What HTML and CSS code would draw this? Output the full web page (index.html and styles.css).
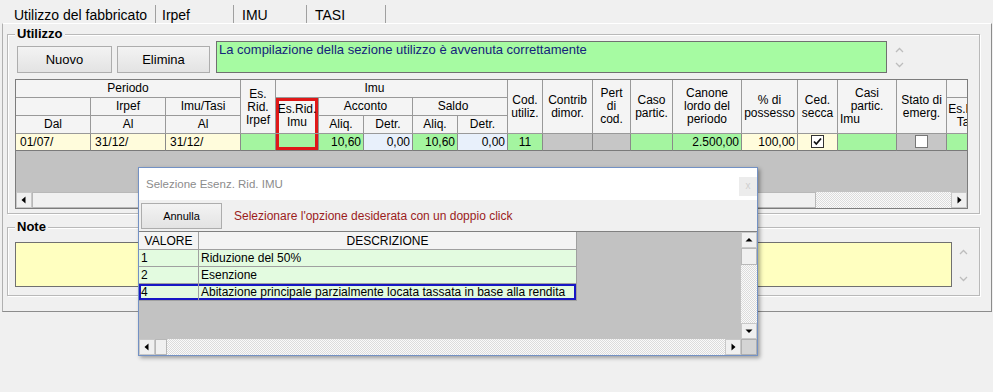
FILE: index.html
```html
<!DOCTYPE html>
<html>
<head>
<meta charset="utf-8">
<link rel="stylesheet" href="styles.css">
</head>
<body>
<div class="tabs">
  <div class="tab tab-main">Utilizzo del fabbricato</div>
  <div class="tab tab-irpef">Irpef</div>
  <div class="tab tab-imu">IMU</div>
  <div class="tab tab-tasi">TASI</div>
</div>
<div class="panel">
  <fieldset class="group g-util">
    <legend>Utilizzo</legend>
    <div class="toprow">
      <button class="btn b-nuovo">Nuovo</button>
      <button class="btn b-elimina">Elimina</button>
      <div class="msg">La compilazione della sezione utilizzo è avvenuta correttamente</div>
      <div class="spin spin-msg">
        <svg width="9" height="6" viewBox="0 0 9 6"><polyline points="1,5 4.5,1.5 8,5" fill="none" stroke="#bdbdbd" stroke-width="1.3"/></svg>
        <svg width="9" height="6" viewBox="0 0 9 6"><polyline points="1,1 4.5,4.5 8,1" fill="none" stroke="#bdbdbd" stroke-width="1.3"/></svg>
      </div>
    </div>
    <div class="grid">
      <div class="grid-body">
        <table class="tbl">
          <colgroup>
            <col><col><col><col><col><col><col><col><col><col><col><col><col><col><col><col><col><col><col>
          </colgroup>
          <tr class="h">
            <th colspan="3">Periodo</th>
            <th rowspan="3" class="esirpef">Es.<br>Rid.<br>Irpef</th>
            <th colspan="5" class="imu">Imu</th>
            <th rowspan="3">Cod.<br>utiliz.</th>
            <th rowspan="3">Contrib<br>dimor.</th>
            <th rowspan="3">Pert<br>di<br>cod.</th>
            <th rowspan="3">Caso<br>partic.</th>
            <th rowspan="3">Canone<br>lordo del<br>periodo</th>
            <th rowspan="3">% di<br>possesso</th>
            <th rowspan="3">Ced.<br>secca</th>
            <th rowspan="3">Casi<br>partic.<br><span class="lft">Imu</span></th>
            <th rowspan="3">Stato di<br>emerg.</th>
            <th></th>
          </tr>
          <tr class="h">
            <th></th>
            <th>Irpef</th>
            <th>Imu/Tasi</th>
            <th rowspan="2" class="hl">Es.Rid.<br>Imu</th>
            <th colspan="2">Acconto</th>
            <th colspan="2" class="saldo">Saldo</th>
            <th rowspan="2" class="last">Es.Rid.<br>Tasi</th>
          </tr>
          <tr class="h">
            <th>Dal</th>
            <th>Al</th>
            <th>Al</th>
            <th>Aliq.</th>
            <th>Detr.</th>
            <th>Aliq.</th>
            <th>Detr.</th>
          </tr>
          <tr class="d">
            <td class="y">01/07/</td>
            <td class="y">31/12/</td>
            <td class="y">31/12/</td>
            <td class="g"></td>
            <td class="g hl"></td>
            <td class="g r">10,60</td>
            <td class="b r">0,00</td>
            <td class="g r">10,60</td>
            <td class="b r">0,00</td>
            <td class="g c">11</td>
            <td class="k"></td>
            <td class="k"></td>
            <td class="g"></td>
            <td class="g r">2.500,00</td>
            <td class="y r">100,00</td>
            <td class="y c"><span class="cb"><svg width="11" height="11" viewBox="0 0 11 11"><polyline points="2,5.5 4.3,8 9,2.5" fill="none" stroke="#111" stroke-width="1.8"/></svg></span></td>
            <td class="g"></td>
            <td class="k c"><span class="cb cb-off"></span></td>
            <td class="g"></td>
          </tr>
        </table>
      </div>
      <div class="hscroll">
        <div class="sbtn"><svg width="14" height="14" viewBox="0 0 14 14"><path d="M8.5 3.5 L4.5 7 L8.5 10.5Z" fill="#000"/></svg></div>
        <div class="thumb main-thumb"></div>
        <div class="track"></div>
        <div class="sbtn"><svg width="14" height="14" viewBox="0 0 14 14"><path d="M5.5 3.5 L9.5 7 L5.5 10.5Z" fill="#000"/></svg></div>
      </div>
    </div>
  </fieldset>
  <fieldset class="group g-note">
    <legend>Note</legend>
    <div class="noterow">
      <div class="note"></div>
      <div class="spin spin-note">
        <svg width="9" height="6" viewBox="0 0 9 6"><polyline points="1,5 4.5,1.5 8,5" fill="none" stroke="#bdbdbd" stroke-width="1.3"/></svg>
        <svg width="9" height="6" viewBox="0 0 9 6"><polyline points="1,1 4.5,4.5 8,1" fill="none" stroke="#bdbdbd" stroke-width="1.3"/></svg>
      </div>
    </div>
  </fieldset>
</div>

<div class="dialog">
  <div class="dlg-title">
    <span class="dlg-caption">Selezione Esenz. Rid. IMU</span>
    <span class="dlg-close">x</span>
  </div>
  <div class="dlg-bar">
    <button class="btn b-annulla">Annulla</button>
    <span class="dlg-msg">Selezionare l'opzione desiderata con un doppio click</span>
  </div>
  <div class="dlg-list">
    <div class="dlg-main">
      <div class="dlg-grid">
        <table class="ltbl">
          <colgroup><col><col></colgroup>
          <tr class="lh"><th>VALORE</th><th>DESCRIZIONE</th></tr>
          <tr><td>1</td><td>Riduzione del 50%</td></tr>
          <tr><td>2</td><td>Esenzione</td></tr>
          <tr class="sel"><td>4</td><td>Abitazione principale parzialmente locata tassata in base alla rendita</td></tr>
        </table>
      </div>
      <div class="vscroll">
        <div class="sbtn v"><svg width="14" height="14" viewBox="0 0 14 14"><path d="M3.5 8.5 L7 5 L10.5 8.5Z" fill="#000"/></svg></div>
        <div class="thumb vthumb"></div>
        <div class="track"></div>
        <div class="sbtn v"><svg width="14" height="14" viewBox="0 0 14 14"><path d="M3.5 5.5 L7 9 L10.5 5.5Z" fill="#000"/></svg></div>
      </div>
    </div>
    <div class="dlg-hrow">
      <div class="hscroll dlg-hscroll">
        <div class="sbtn"><svg width="14" height="14" viewBox="0 0 14 14"><path d="M8.5 3.5 L4.5 7 L8.5 10.5Z" fill="#000"/></svg></div>
        <div class="thumb dlg-thumb"></div>
        <div class="track"></div>
        <div class="sbtn"><svg width="14" height="14" viewBox="0 0 14 14"><path d="M5.5 3.5 L9.5 7 L5.5 10.5Z" fill="#000"/></svg></div>
      </div>
      <div class="corner"></div>
    </div>
  </div>
</div>
</body>
</html>
```

FILE: styles.css
```css
* { box-sizing: border-box; }
html, body { margin: 0; padding: 0; background: #f0f0f0; }
body {
  position: relative;
  width: 993px;
  height: 392px;
  overflow: hidden;
  font-family: "Liberation Sans", Arial, sans-serif;
  font-size: 12px;
  color: #000;
}

/* Tabs */
.tabs { display: flex; height: 23px; padding: 5px 0 0 4px; }
.tab {
  height: 18px;
  font-size: 14px;
  line-height: 20px;
  border-right: 1px solid #a0a0a0;
  white-space: nowrap;
  padding-left: 8px;
}
.tab-main { width: 152px; padding-left: 10px; }
.tab-irpef { width: 78px; padding-left: 6px; }
.tab-imu { width: 73px; }
.tab-tasi { width: 79px; }

/* Main panel */
.panel {
  margin-left: 2px;
  width: 990px;
  height: 289px;
  border: 1px solid #8c8c8c;
  border-top-color: #fff;
  border-left-color: #b0b0b0;
  padding-top: 3px;
}

.group {
  margin: 0 11px 0 4px;
  padding: 0 8px 4px 7px;
  border: 1px solid #b9b9b9;
  box-shadow: inset 1px 1px 0 #fff, 1px 1px 0 #fff;
  min-width: 0;
}
.group legend {
  font-weight: bold;
  font-size: 13px;
  line-height: 14px;
  padding: 0 2px;
  background: #f0f0f0;
}

.toprow { display: flex; align-items: flex-end; height: 32px; }
.btn {
  font-family: inherit;
  font-size: 13px;
  color: #000;
  background: linear-gradient(#f3f3f3, #e3e3e3);
  border: 1px solid #adadad;
  padding: 0;
  margin: 0;
  height: 27px;
}
.b-nuovo { width: 95px; margin-left: 2px; }
.b-elimina { width: 93px; margin-left: 5px; }
.msg {
  margin-left: 6px;
  width: 671px;
  height: 32px;
  align-self: flex-start;
  background: #a6fba2;
  border: 1px solid #707070;
  color: #14247a;
  font-size: 13px;
  line-height: 13px;
  padding: 1px 2px;
}
.spin { display: flex; flex-direction: column; justify-content: space-between; }
.spin-msg { align-self: flex-start; height: 21px; margin: 6px 0 0 8px; }

/* Grid */
.grid {
  margin-top: 6px;
  width: 953px;
  height: 130px;
  border: 1px solid #7c7c7c;
  background: #c2c2c2;
  display: flex;
  flex-direction: column;
  overflow: hidden;
}
.grid-body { flex: 1; overflow: hidden; }
.tbl {
  width: 973px;
  table-layout: fixed;
  border-collapse: separate;
  border-spacing: 0;
}
.tbl col:nth-child(1), .tbl col:nth-child(2), .tbl col:nth-child(3) { width: 75px; }
.tbl col:nth-child(4) { width: 35px; }
.tbl col:nth-child(5) { width: 43px; }
.tbl col:nth-child(6) { width: 45px; }
.tbl col:nth-child(7) { width: 49px; }
.tbl col:nth-child(8) { width: 45px; }
.tbl col:nth-child(9) { width: 50px; }
.tbl col:nth-child(10) { width: 35px; }
.tbl col:nth-child(11) { width: 50px; }
.tbl col:nth-child(12) { width: 38px; }
.tbl col:nth-child(13) { width: 42px; }
.tbl col:nth-child(14) { width: 69px; }
.tbl col:nth-child(15) { width: 56px; }
.tbl col:nth-child(16) { width: 40px; }
.tbl col:nth-child(17) { width: 59px; }
.tbl col:nth-child(18) { width: 50px; }
.tbl col:nth-child(19) { width: 42px; }

.tbl tr.h { height: 18px; }
.tbl tr.d { height: 17px; }
.tbl th {
  background: #f4f4f4;
  font-weight: normal;
  font-size: 12px;
  line-height: 13px;
  padding: 0;
  text-align: center;
  vertical-align: middle;
  white-space: nowrap;
  overflow: hidden;
  border-right: 1px solid #999;
  border-bottom: 1px solid #999;
}
.tbl th.esirpef { padding-top: 2px; }
.tbl th.imu { padding-right: 34px; }
.tbl th.saldo { padding-right: 14px; }
.tbl th .lft { display: block; text-align: left; padding-left: 2px; }
.tbl td {
  padding: 0 2px 0 4px;
  font-size: 12px;
  line-height: 16px;
  white-space: nowrap;
  overflow: hidden;
  border-right: 1px solid #8a8a8a;
  border-bottom: 1px solid #7a7a7a;
}
.tbl td.r { text-align: right; }
.tbl td.c { text-align: center; padding: 0; }
.tbl td.y { background: #fffcdc; }
.tbl td.g { background: #a4f5a0; }
.tbl td.b { background: #e8f0fb; }
.tbl td.k { background: #c6c6c6; }
.tbl th.hl { box-shadow: inset 3px 0 0 #e01818, inset -3px 0 0 #e01818, inset 0 3px 0 #e01818; }
.tbl td.hl { box-shadow: inset 3px 0 0 #e01818, inset -3px 0 0 #e01818, inset 0 -3px 0 #e01818; }

.cb {
  display: inline-block;
  width: 13px;
  height: 13px;
  border: 1px solid #333;
  background: #fff;
  vertical-align: middle;
  margin-top: -2px;
}
.cb svg { display: block; margin: 0; }
.cb-off { border-color: #777; }

/* Scrollbars */
.hscroll { display: flex; height: 16px; flex: none; }
.sbtn {
  width: 16px;
  height: 16px;
  flex: none;
  background: #f0f0f0;
  border: 1px solid #c8c8c8;
  display: flex;
  align-items: center;
  justify-content: center;
}
.sbtn svg { display: block; }
.thumb { background: #f0f0f0; border: 1px solid #b8b8b8; flex: none; }
.main-thumb { width: 784px; }
.track {
  flex: 1;
  background: repeating-conic-gradient(#fafafa 0 25%, #dcdcdc 0 50%) 0 0 / 2px 2px;
}

/* Note */
.g-note { margin-top: 6px; padding-bottom: 8px; }
.noterow { display: flex; margin-top: 8px; }
.note {
  width: 937px;
  height: 45px;
  background: #ffffc0;
  border: 1px solid #707070;
}
.spin-note { height: 33px; margin: 7px 0 0 7px; }

/* Dialog */
.dialog {
  position: absolute;
  left: 138px;
  top: 167px;
  width: 620px;
  height: 189px;
  border: 1px solid #7391c4;
  background: #f0f0f0;
  box-shadow: 2px 2px 4px rgba(0, 0, 0, 0.35);
  display: flex;
  flex-direction: column;
}
.dlg-title {
  height: 32px;
  flex: none;
  background: #fff;
  display: flex;
  justify-content: space-between;
  align-items: flex-start;
  padding-left: 7px;
}
.dlg-caption { font-size: 11.5px; color: #8c8c8c; line-height: 32px; }
.dlg-close {
  width: 18px;
  height: 19px;
  margin-top: 9px;
  background: #ececec;
  color: #cfcfcf;
  font-size: 10px;
  line-height: 18px;
  text-align: center;
}
.dlg-bar { height: 31px; flex: none; display: flex; align-items: center; }
.b-annulla { width: 81px; height: 26px; margin-left: 2px; font-size: 11px; }
.dlg-msg { margin-left: 12px; color: #9b1c1c; font-size: 12px; }
.dlg-list {
  flex: 1;
  border-top: 1px solid #808080;
  display: flex;
  flex-direction: column;
  min-height: 0;
}
.dlg-main { flex: 1; display: flex; min-height: 0; }
.dlg-grid { flex: 1; background: #c2c2c2; overflow: hidden; }
.ltbl {
  width: 438px;
  table-layout: fixed;
  border-collapse: separate;
  border-spacing: 0;
}
.ltbl col:nth-child(1) { width: 60px; }
.ltbl col:nth-child(2) { width: 378px; }
.ltbl tr { height: 17px; }
.ltbl tr.lh { height: 18px; }
.ltbl th {
  background: #f4f4f4;
  font-weight: normal;
  font-size: 12px;
  line-height: 16px;
  padding: 0;
  text-align: center;
  border-right: 1px solid #a0a0a0;
  border-bottom: 1px solid #a0a0a0;
}
.ltbl td {
  background: #e3fbe0;
  font-size: 12px;
  line-height: 16px;
  padding: 0 2px;
  white-space: nowrap;
  border-right: 1px solid #a0a0a0;
  border-bottom: 1px solid #a0a0a0;
}
.ltbl tr.sel td:first-child { box-shadow: inset 2px 2px 0 #1717c4, inset 0 -2px 0 #1717c4; }
.ltbl tr.sel td:last-child { box-shadow: inset -2px 2px 0 #1717c4, inset 0 -2px 0 #1717c4; }

.vscroll { width: 16px; flex: none; display: flex; flex-direction: column; }
.vthumb { height: 17px; }
.dlg-hrow { display: flex; height: 16px; flex: none; }
.dlg-hscroll { flex: 1; }
.dlg-thumb { width: 12px; }
.corner { width: 16px; height: 16px; background: #d4d4d4; border: 1px solid #b0b0b0; }
```
